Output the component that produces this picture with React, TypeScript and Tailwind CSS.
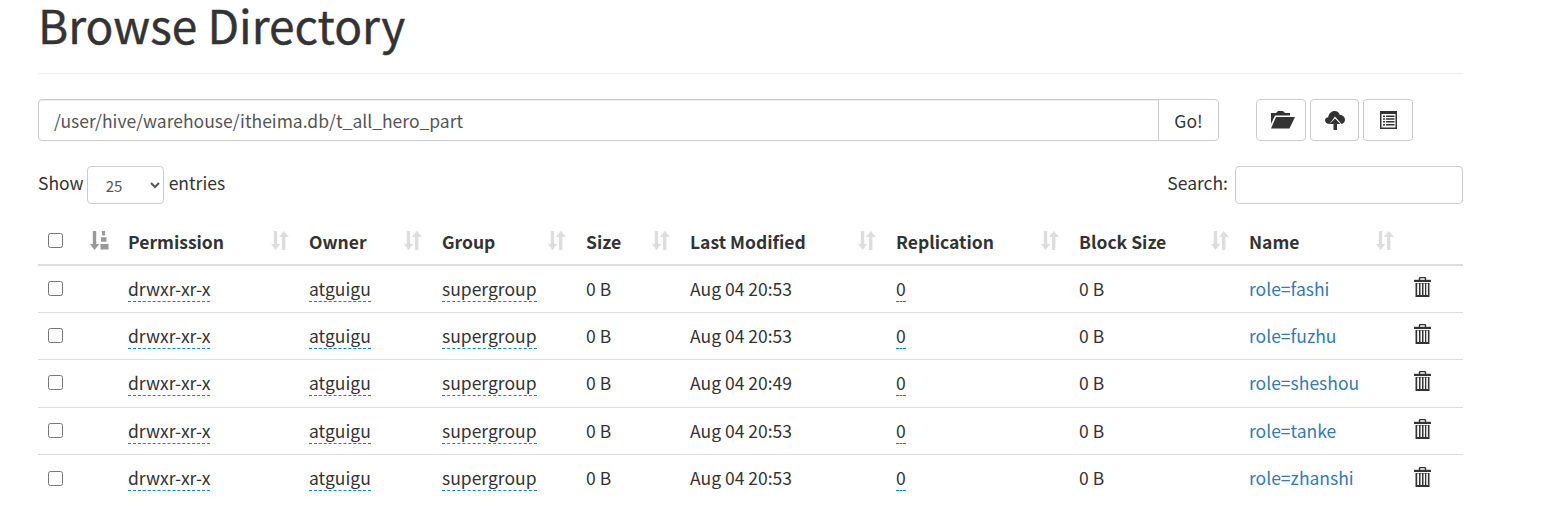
import React from "react";

const FONT = '"Noto Sans CJK SC", "Noto Sans", sans-serif';

function FolderIcon() {
  return (
    <svg width="24" height="18" viewBox="0 0 24 18" className="block">
      <path d="M0 2h5l2-2h5l2 2h5v2.500H4L0 13z" fill="#333" />
      <path d="M5 6h19l-5.500 11.500H0z" fill="#333" />
    </svg>
  );
}
function CloudIcon() {
  return (
    <svg width="20" height="19" viewBox="0 0 20 19" className="block">
      <path d="M4.500 13C2 13 0 11.500 0 9.300 0 7.500 1.500 6.300 3.200 6.200 3.800 2.500 6.500 0 9.500 0c2.600 0 4.700 1.600 5.300 3.900 2.700 0 5.200 1.900 5.200 4.800 0 2.100-1.400 3.800-3.500 4.300L10 5.500z" fill="#333" />
      <path d="M10 7.500l5.500 5.500h-3.500v6H8.500v-6H4.500z" fill="#333" />
    </svg>
  );
}
function ListIcon() {
  return (
    <svg width="17" height="18" viewBox="0 0 17 18" className="block">
      <path d="M0 0h17v18H0z" fill="#333" />
      <path d="M1.500 3h14v13.500h-14z" fill="#fff" />
      <path d="M3 4.500h2V6H3zM6 4.500h8.500V6H6zM3 7.300h2v1.500H3zM6 7.300h8.500v1.500H6zM3 10.100h2v1.500H3zM6 10.100h8.500v1.500H6zM3 12.900h2v1.500H3zM6 12.900h8.500v1.500H6z" fill="#333" />
    </svg>
  );
}
function TrashIcon() {
  return (
    <svg width="17" height="20" viewBox="0 0 17 20" className="block">
      <path d="M5.500 3V1.500C5.500.8 6 .5 6.700.5h3.600c.7 0 1.200.3 1.200 1V3" fill="none" stroke="#333" strokeWidth="1.400" />
      <path d="M0 2.800h17v2.200H0z" fill="#333" />
      <path d="M1.500 6h14v14h-14z" fill="#333" />
      <path d="M3.200 6.500v11.500h1.800V6.500zM6.500 6.500v11.500H8V6.500zM9.500 6.500v11.500H11V6.500zM12.300 6.500v11.500h1.600V6.500z" fill="#fff" />
    </svg>
  );
}
function SortBoth() {
  return (
    <svg width="18" height="19" viewBox="0 0 18 19" className="block">
      <path d="M2.800 0h3.400v13H9.300l-4.800 6L0 13h2.800z" fill="#ddd" />
      <path d="M11 19h3.400V6H18L12.700 0 8 6h3z" fill="#ddd" />
    </svg>
  );
}
function SortActive() {
  return (
    <svg width="19" height="19" viewBox="0 0 19 19" className="block">
      <path d="M2.800 0h3.400v13H9.300l-4.800 6L0 13h2.800z" fill="#999" />
      <path d="M12 0h3v4.500h-3zM11 6.300h5.500v4.500H11zM10.500 13H18.500v5.500h-8z" fill="#999" />
    </svg>
  );
}

const rows = [
  ["Aug 04 20:53", "role=fashi"],
  ["Aug 04 20:53", "role=fuzhu"],
  ["Aug 04 20:49", "role=sheshou"],
  ["Aug 04 20:53", "role=tanke"],
  ["Aug 04 20:53", "role=zhanshi"],
];

const headers: [string, string][] = [
  ["Permission", "w-[181px]"],
  ["Owner", "w-[133px]"],
  ["Group", "w-[144px]"],
  ["Size", "w-[104px]"],
  ["Last Modified", "w-[206px]"],
  ["Replication", "w-[183px]"],
  ["Block Size", "w-[170px]"],
  ["Name", "w-[165px]"],
];

function Dotted({ children }: { children: React.ReactNode }) {
  return <span className="border-b border-dashed border-[#0088cc]">{children}</span>;
}

export default function App() {
  return (
    <div className="w-[1565px] h-[510px] bg-white text-[17.5px] text-[#333] pl-[38px] pr-[102px]" style={{ fontFamily: FONT }}>
      <h1 className="text-[46px] leading-[48px] font-normal whitespace-nowrap pb-[25px] border-b border-[#eee] mb-[25px] [-webkit-text-stroke:0.4px_#333]">Browse Directory</h1>

      <div className="flex items-start h-[42px]">
        <div className="flex w-[1181px] h-[42px]">
          <div className="flex-1 h-[42px] border border-[#ccc] rounded-l-[4px] pl-[15px] pr-[15px] pt-[2px] flex items-center text-[#555] shadow-[inset_0_1px_1px_rgba(0,0,0,0.075)]">
            /user/hive/warehouse/itheima.db/t_all_hero_part
          </div>
          <div className="w-[61px] -ml-px h-[42px] border border-[#ccc] rounded-r-[4px] pt-[2px] flex items-center justify-center">Go!</div>
        </div>
        <div className="flex gap-1 ml-[37px]">
          <div className="w-[50px] h-[42px] border border-[#ccc] rounded-[4px] pl-[3px] flex items-center justify-center"><FolderIcon /></div>
          <div className="w-[49px] h-[42px] border border-[#ccc] rounded-[4px] flex items-center justify-center"><CloudIcon /></div>
          <div className="w-[50px] h-[42px] border border-[#ccc] rounded-[4px] flex items-center justify-center"><ListIcon /></div>
        </div>
      </div>

      <div className="flex items-center justify-between h-[38px] mt-[25px] mb-[17px]">
        <div className="flex items-center">
          <span className="mb-[3px]">Show</span>
          <select defaultValue="25" className="w-[77px] h-[38px] ml-[3px] mr-[5px] border border-[#ccc] rounded-[4px] px-[14px] text-[15px] text-[#555] bg-white">
            <option>25</option>
          </select>
          <span className="mb-[3px]">entries</span>
        </div>
        <div className="flex items-center">
          <span className="mb-[3px]">Search:</span>
          <div className="w-[228px] h-[38px] ml-[7px] border border-[#ccc] rounded-[4px]" />
        </div>
      </div>

      <table className="w-[1425px] table-fixed border-collapse">
        <thead>
          <tr className="h-[44px] border-b-2 border-[#ddd]">
            <th className="w-[42px] px-[10px] text-left"><input type="checkbox" className="block w-[15px] h-[15px] mb-[4px]" /></th>
            <th className="w-[38px] px-[10px] text-left"><div className="mb-[5px]"><SortActive /></div></th>
            {headers.map(([h, w]) => (
              <th key={h} className={`${w} pl-[10px] text-left font-bold`}>
                <div className="flex items-center justify-between pr-[10px]">
                  <span>{h}</span>
                  <div className="mb-[5px]"><SortBoth /></div>
                </div>
              </th>
            ))}
            <th className="w-[59px]" />
          </tr>
        </thead>
        <tbody>
          {rows.map(([date, name]) => (
            <tr key={name} className="h-[47.4px] border-b border-[#ddd] last:border-b-0">
              <td className="px-[10px]"><input type="checkbox" className="block w-[15px] h-[15px] mb-[1px]" /></td>
              <td />
              <td className="px-[10px]"><Dotted>drwxr-xr-x</Dotted></td>
              <td className="px-[10px]"><Dotted>atguigu</Dotted></td>
              <td className="px-[10px]"><Dotted>supergroup</Dotted></td>
              <td className="px-[10px]">0 B</td>
              <td className="px-[10px]">{date}</td>
              <td className="px-[10px]"><Dotted>0</Dotted></td>
              <td className="px-[10px]">0 B</td>
              <td className="px-[10px] text-[#337ab7]">{name}</td>
              <td className="px-[10px]"><div className="mb-[4px]"><TrashIcon /></div></td>
            </tr>
          ))}
        </tbody>
      </table>
    </div>
  );
}
